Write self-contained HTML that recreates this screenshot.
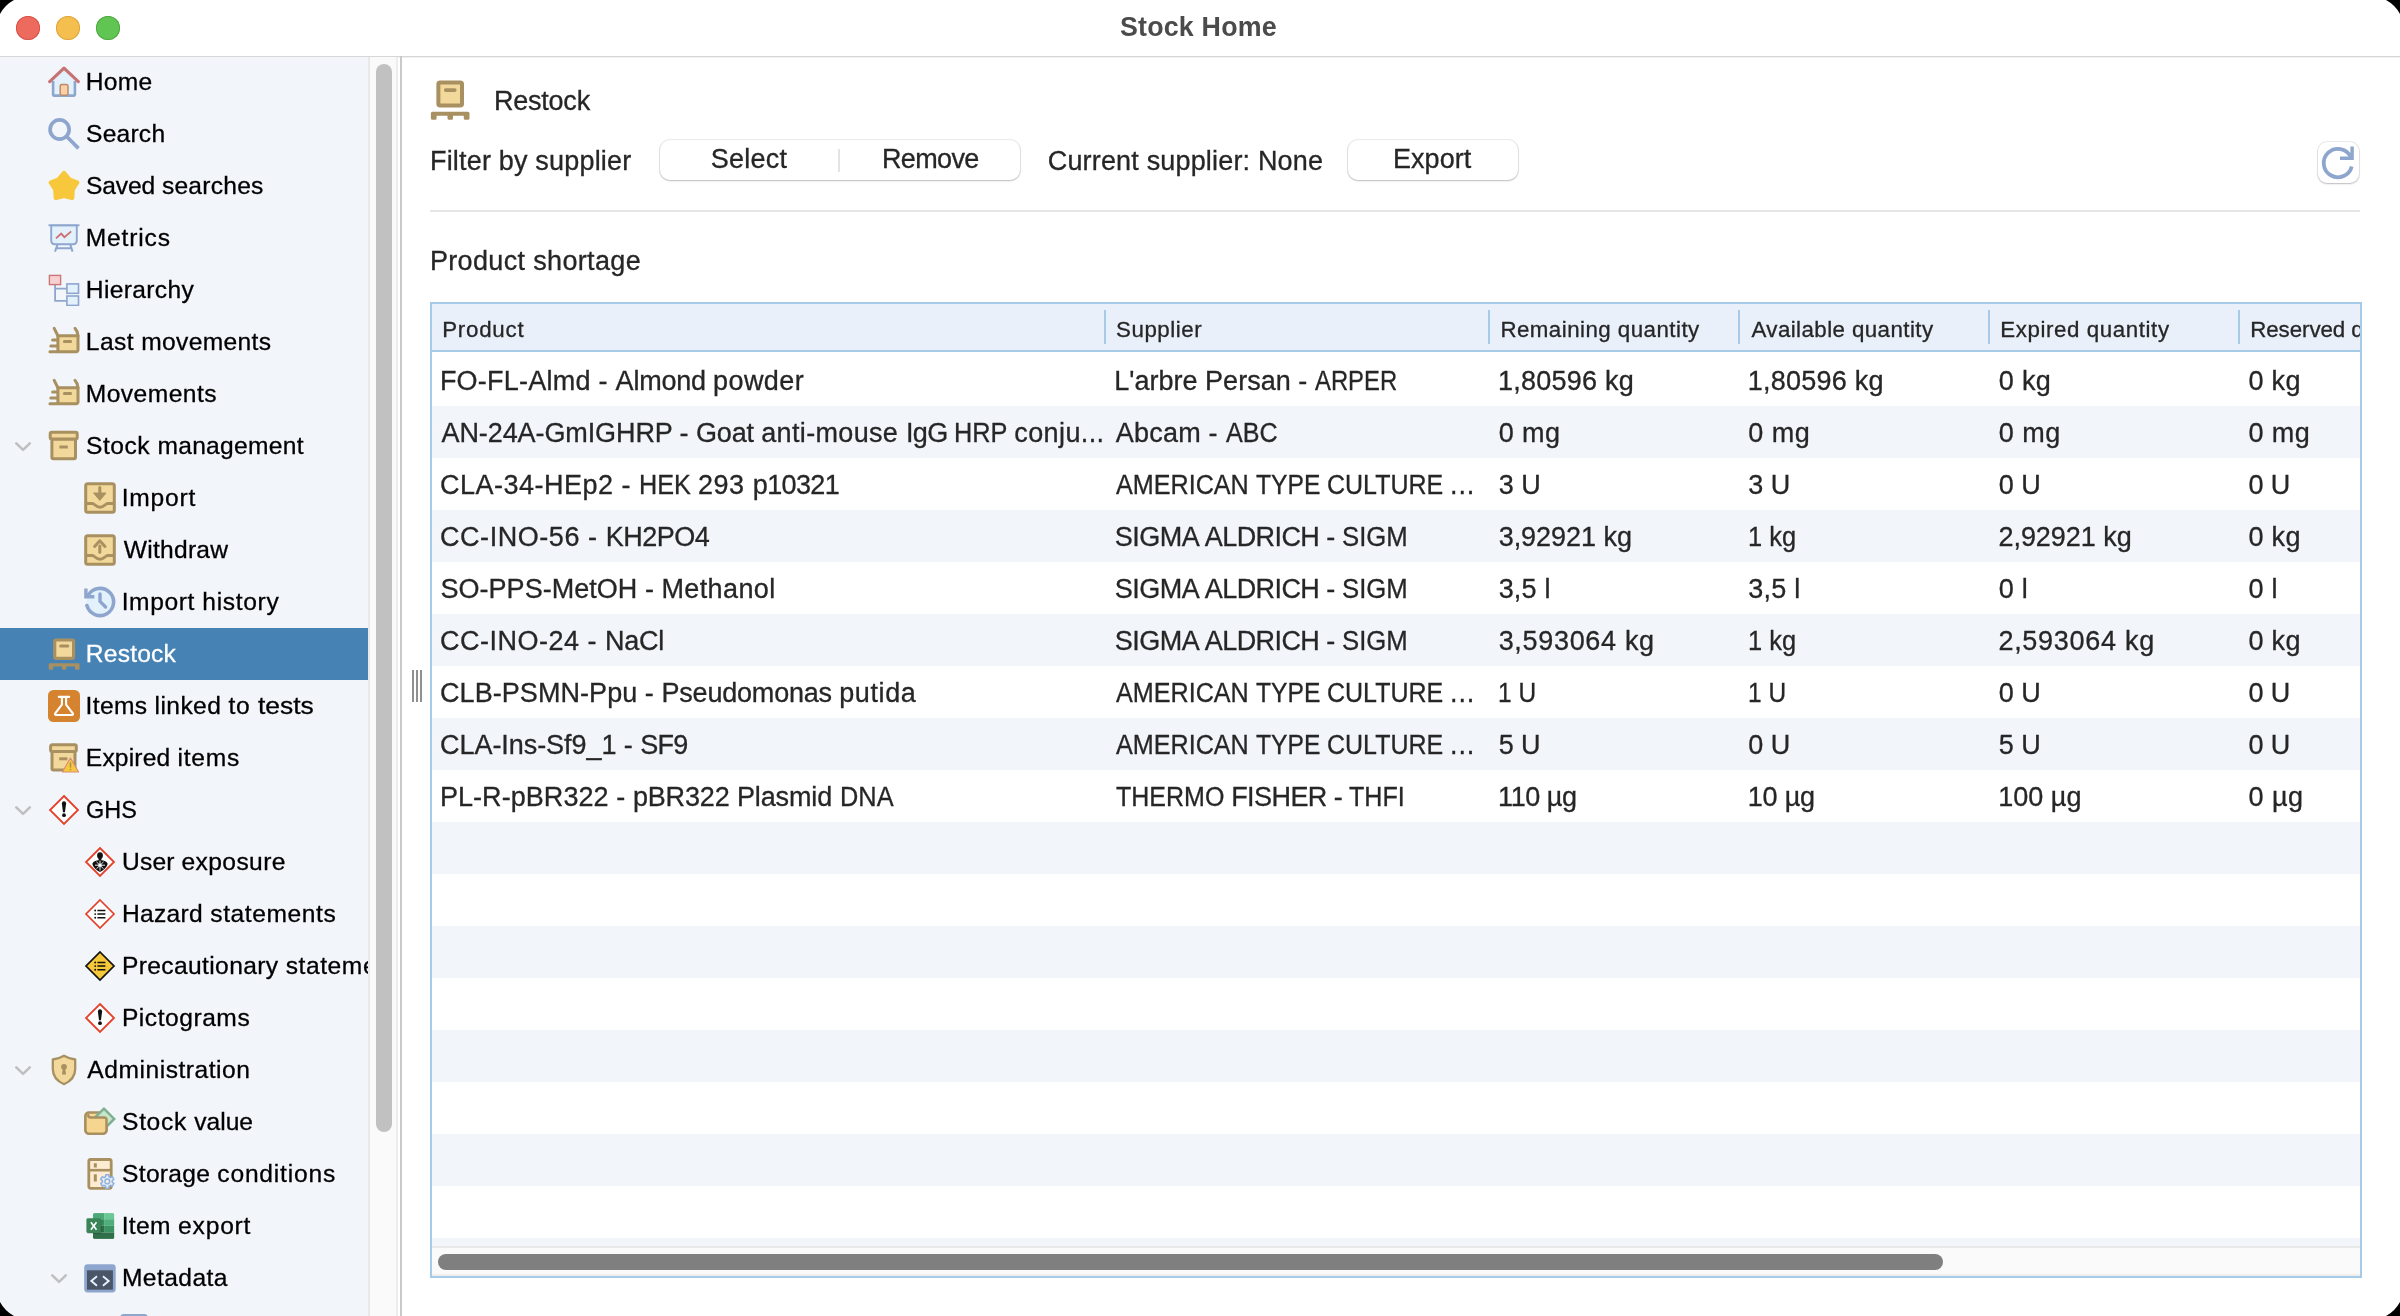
<!DOCTYPE html>
<html><head><meta charset="utf-8"><title>Stock Home</title>
<style>
*{box-sizing:border-box;margin:0;padding:0}
html,body{width:2400px;height:1316px;overflow:hidden;background:#fff}
body{font-family:"Liberation Sans",sans-serif;position:relative;color:#262626}
.abs,.ic{position:absolute}
.tx{position:absolute;line-height:1;white-space:pre;-webkit-text-stroke:0.3px currentColor}
.title{-webkit-text-stroke:0}
.sb{font-size:24.6px;font-weight:normal}
.cell{font-size:27px;font-weight:normal}
.hdr{font-size:22.3px;font-weight:normal}
.lbl{font-size:27px;font-weight:normal}
.title{font-size:26.8px;font-weight:bold}
#title{position:absolute;left:0;top:0;width:2400px;height:56px;background:#fff}
.dot{position:absolute;top:16px;width:24px;height:24px;border-radius:50%}
#tline{position:absolute;left:0;top:56px;width:2400px;height:1px;background:#d6d6d6}
#tline2{position:absolute;left:0;top:57px;width:2400px;height:1px;background:#f1f1f1}
#sidebar{position:absolute;left:0;top:57px;width:368px;height:1259px;background:#f2f6fb;overflow:hidden}
#sbin{position:absolute;left:0;top:-57px;width:368px;height:1400px}
#vtrack{position:absolute;left:368px;top:57px;width:30px;height:1259px;background:#fafafa;border-left:2px solid #e9e9e9;border-right:2px solid #ededed}
#vthumb{position:absolute;left:376px;top:64px;width:16px;height:1068px;border-radius:8px;background:#c1c1c1}
#split{position:absolute;left:400px;top:56px;width:2px;height:1260px;background:#c9c9c9}
.grip{position:absolute;top:670px;width:2px;height:32px;background:#909090}
.btn{position:absolute;top:140px;height:40px;background:#fff;border-radius:10px;box-shadow:0 0 0 1px rgba(0,0,0,0.075),0 1px 2px rgba(0,0,0,0.2)}
#hr{position:absolute;left:430px;top:210px;width:1930px;height:2px;background:#e6e6e6}
#table{position:absolute;left:430px;top:302px;width:1932px;height:976px;border:2px solid #a5cbe8;background:#fff;overflow:hidden}
#thead{position:absolute;left:0;top:0;width:1928px;height:48px;background:#e9f0fa;border-bottom:2px solid #a5cbe8}
#table .sep{position:absolute;top:6px;width:2px;height:34px;background:#a5cbe8}
.alt{position:absolute;left:0;width:1928px;height:52px;background:#f2f6fb}
#htrack{position:absolute;left:0;top:942px;width:1928px;height:30px;background:#fafafa;border-top:2px solid #e8e8e8;border-bottom:2px solid #efefef}
#hthumb{position:absolute;left:6px;top:950px;width:1505px;height:16px;border-radius:8px;background:#7f7f7f}
#win{position:absolute;left:0;top:0;width:2400px;height:1316px;overflow:hidden;transform:translateZ(0);will-change:transform;background:#fff}
</style></head><body><div id="win">
<div id="title"><span class="tx title" style="left:1119.98px;top:14px;letter-spacing:0.201px;color:#4b4b4b">Stock Home</span>
<div class="dot" style="left:16px;background:#ed6a5e;box-shadow:inset 0 0 0 1px #d9534a"></div>
<div class="dot" style="left:56px;background:#f5bf4f;box-shadow:inset 0 0 0 1px #dea73e"></div>
<div class="dot" style="left:96px;background:#61c554;box-shadow:inset 0 0 0 1px #52a843"></div>
</div>
<div id="tline"></div><div id="tline2"></div>
<div id="sidebar"><div id="sbin">
<svg class="ic" style="left:48px;top:66px" width="32" height="32" viewBox="0 0 32 32">
<path d="M5.1 14.6 L16 3.4 L26.9 14.6 V29.6 H5.1Z" fill="#e3f1fc"/>
<path d="M5.1 15 V28.4 a1.2 1.2 0 0 0 1.2 1.2 H25.7 a1.2 1.2 0 0 0 1.2-1.2 V15" stroke="#8ea6ce" stroke-width="2.6" fill="none"/>
<rect x="12.2" y="18.4" width="7.8" height="10.8" rx="1.6" fill="#fbd0a6" stroke="#b98c6a" stroke-width="1.5"/>
<path d="M1.7 15.6 L16 2.1 L30.3 15.6" stroke="#c87373" stroke-width="3.2" fill="none" stroke-linecap="round" stroke-linejoin="round"/>
</svg>
<span class="tx sb" style="left:85.80px;top:70px;letter-spacing:0.257px;color:#000">Home</span>
<svg class="ic" style="left:48px;top:118px" width="32" height="32" viewBox="0 0 32 32">
<circle cx="11.6" cy="11.5" r="9.55" stroke="#8ea6ce" stroke-width="3.7" fill="none"/>
<path d="M18.4 18.3 L30.5 30.4" stroke="#8ea6ce" stroke-width="3.7" fill="none"/>
</svg>
<span class="tx sb" style="left:86.00px;top:122px;letter-spacing:0.229px;color:#000">Search</span>
<svg class="ic" style="left:48px;top:170px" width="32" height="32" viewBox="0 0 32 32"><polygon points="16.00,3.10 21.29,9.52 29.03,12.57 24.56,19.58 24.05,27.88 16.00,25.80 7.95,27.88 7.44,19.58 2.97,12.57 10.71,9.52" fill="#f8c83c" stroke="#f8c83c" stroke-width="4.6" stroke-linejoin="round"/></svg>
<span class="tx sb" style="left:86.00px;top:174px;letter-spacing:-0.113px;color:#000">Saved </span><span class="tx sb" style="left:161.90px;top:174px;letter-spacing:0.243px;color:#000">searches</span>
<svg class="ic" style="left:48px;top:222px" width="32" height="32" viewBox="0 0 32 32">
<path d="M3.2 3.4 H28.8 V18.8 a3.4 3.4 0 0 1-3.4 3.4 H6.6 a3.4 3.4 0 0 1-3.4-3.4Z" fill="#e3f1fc" stroke="#8ea6ce" stroke-width="1.9"/>
<path d="M0.4 3.3 H31.6" stroke="#8ea6ce" stroke-width="1.8"/>
<path d="M9.6 22.4 L7 29.6 M22.2 22.4 L24.6 29.6 M8 26.2 H23.6" stroke="#8ea6ce" stroke-width="2" fill="none"/>
<path d="M8 16.4 L13.2 11.6 L16.4 15.2 L23.2 9.4" stroke="#cd6f6f" stroke-width="1.8" fill="none"/>
</svg>
<span class="tx sb" style="left:85.80px;top:226px;letter-spacing:0.825px;color:#000">Metrics</span>
<svg class="ic" style="left:48px;top:274px" width="32" height="32" viewBox="0 0 32 32">
<path d="M7.1 10.6 V26.8 H18.6 M7.1 14.7 H18.6" stroke="#8ea6ce" stroke-width="1.8" fill="none"/>
<rect x="1.4" y="1.4" width="11.2" height="9.2" fill="#f8d0d0" stroke="#cc7777" stroke-width="1.4"/>
<rect x="18.9" y="9.9" width="11.6" height="9.4" fill="#e3f1fc" stroke="#8ea6ce" stroke-width="1.6"/>
<rect x="18.9" y="22" width="11.6" height="9.4" fill="#e3f1fc" stroke="#8ea6ce" stroke-width="1.6"/>
</svg>
<span class="tx sb" style="left:85.80px;top:278px;letter-spacing:0.346px;color:#000">Hierarchy</span>
<svg class="ic" style="left:48px;top:326px" width="32" height="32" viewBox="0 0 32 32">
<path d="M9.9 9.7 H30 V24 a1.6 1.6 0 0 1-1.6 1.6 H9.9Z" fill="#f3d89c"/>
<path d="M1.9 25.7 H28.2 a1.8 1.8 0 0 0 1.8-1.8 V9.7 H9.9 V25.7" stroke="#a89060" stroke-width="3" fill="none" stroke-linecap="round" stroke-linejoin="round"/>
<path d="M9.9 9.7 L6.2 2.4 M30 9.7 C29.6 6 28.6 4 27 2.4" stroke="#a89060" stroke-width="3" fill="none" stroke-linecap="round"/>
<path d="M4.6 14 H9 M2.8 20 H9 M16.4 15.6 H22.6" stroke="#a89060" stroke-width="3" fill="none" stroke-linecap="round"/>
</svg>
<span class="tx sb" style="left:85.80px;top:330px;letter-spacing:0.414px;color:#000">Last </span><span class="tx sb" style="left:141.20px;top:330px;letter-spacing:0.334px;color:#000">movements</span>
<svg class="ic" style="left:48px;top:378px" width="32" height="32" viewBox="0 0 32 32">
<path d="M9.9 9.7 H30 V24 a1.6 1.6 0 0 1-1.6 1.6 H9.9Z" fill="#f3d89c"/>
<path d="M1.9 25.7 H28.2 a1.8 1.8 0 0 0 1.8-1.8 V9.7 H9.9 V25.7" stroke="#a89060" stroke-width="3" fill="none" stroke-linecap="round" stroke-linejoin="round"/>
<path d="M9.9 9.7 L6.2 2.4 M30 9.7 C29.6 6 28.6 4 27 2.4" stroke="#a89060" stroke-width="3" fill="none" stroke-linecap="round"/>
<path d="M4.6 14 H9 M2.8 20 H9 M16.4 15.6 H22.6" stroke="#a89060" stroke-width="3" fill="none" stroke-linecap="round"/>
</svg>
<span class="tx sb" style="left:85.80px;top:382px;letter-spacing:0.447px;color:#000">Movements</span>
<svg class="ic" style="left:13px;top:440px" width="20" height="14" viewBox="0 0 20 14"><path d="M3.3 3.4 L10.05 9.9 L16.8 3.4" stroke="#c0c0c0" stroke-width="2.7" fill="none" stroke-linecap="round" stroke-linejoin="round"/></svg>
<svg class="ic" style="left:48px;top:430px" width="32" height="32" viewBox="0 0 32 32">
<rect x="3.9" y="9" width="23.6" height="19.7" rx="1.5" fill="#f3d89c" stroke="#a89060" stroke-width="3"/>
<rect x="2.2" y="2.2" width="27" height="6.8" rx="1.5" fill="#f3d89c" stroke="#a89060" stroke-width="3"/>
<path d="M11.4 17 H19.8" stroke="#a89060" stroke-width="3" stroke-linecap="butt"/>
</svg>
<span class="tx sb" style="left:86.00px;top:434px;letter-spacing:0.509px;color:#000">Stock </span><span class="tx sb" style="left:157.40px;top:434px;letter-spacing:0.286px;color:#000">management</span>
<svg class="ic" style="left:84px;top:482px" width="32" height="32" viewBox="0 0 32 32">
<rect x="1.7" y="1.7" width="28.6" height="28.6" rx="2" fill="#f3d89c" stroke="#a89060" stroke-width="3"/>
<path d="M2 21.4 H8.4 C10.4 21.4 11.6 25.2 16 25.2 C20.4 25.2 21.6 21.4 23.6 21.4 H30" stroke="#a89060" stroke-width="3" fill="none"/>
<path d="M15.8 5.6 V13" stroke="#a89060" stroke-width="3" stroke-linecap="round"/><path d="M9.6 11 H22 L15.8 18.4Z" fill="#a89060" stroke="#a89060" stroke-width="1" stroke-linejoin="round"/></svg>
<span class="tx sb" style="left:121.70px;top:486px;letter-spacing:0.806px;color:#000">Import</span>
<svg class="ic" style="left:84px;top:534px" width="32" height="32" viewBox="0 0 32 32">
<rect x="1.7" y="1.7" width="28.6" height="28.6" rx="2" fill="#f3d89c" stroke="#a89060" stroke-width="3"/>
<path d="M2 21.4 H8.4 C10.4 21.4 11.6 25.2 16 25.2 C20.4 25.2 21.6 21.4 23.6 21.4 H30" stroke="#a89060" stroke-width="3" fill="none"/>
<path d="M15.8 12 V18.2" stroke="#a89060" stroke-width="3" stroke-linecap="round"/><path d="M10.6 12.4 L15.8 6.8 L21 12.4" fill="none" stroke="#a89060" stroke-width="3" stroke-linecap="round" stroke-linejoin="round"/></svg>
<span class="tx sb" style="left:123.80px;top:538px;letter-spacing:0.252px;color:#000">Withdraw</span>
<svg class="ic" style="left:84px;top:586px" width="32" height="32" viewBox="0 0 32 32">
<circle cx="16" cy="16" r="13.6" fill="#e3f1fc"/>
<path d="M2.9 19.6 A13.6 13.6 0 1 0 4.2 9.2" stroke="#8ea6ce" stroke-width="3.6" fill="none" stroke-linecap="round"/>
<path d="M1.9 2.4 V10.8 H10.4" stroke="#8ea6ce" stroke-width="3.4" fill="none"/>
<path d="M16 8 V15.4 L21.6 21" stroke="#8ea6ce" stroke-width="3.4" fill="none" stroke-linecap="round" stroke-linejoin="round"/>
</svg>
<span class="tx sb" style="left:121.70px;top:590px;letter-spacing:0.581px;color:#000">Import </span><span class="tx sb" style="left:202.30px;top:590px;letter-spacing:0.660px;color:#000">history</span>
<div class="abs" style="left:0;top:628px;width:368px;height:52px;background:#4682b4"></div>
<svg class="ic" style="left:48px;top:638px" width="32" height="32" viewBox="0 0 32 32">
<rect x="6.7" y="2" width="18.9" height="18.4" rx="1.4" fill="#f3d89c" stroke="#a89060" stroke-width="3.2"/>
<path d="M12.6 8 H19.8" stroke="#a89060" stroke-width="3" stroke-linecap="round"/>
<path d="M0.7 26.5 a1.2 1.2 0 0 1 1.2-1.2 H30.4 a1.2 1.2 0 0 1 1.2 1.2 V30.6 a1.2 1.2 0 0 1-1.2 1.2 H28.2 a1.2 1.2 0 0 1-1.2-1.2 V28.6 H18.4 V30.6 a1.2 1.2 0 0 1-1.2 1.2 H15.2 a1.2 1.2 0 0 1-1.2-1.2 V28.6 H5.3 V30.6 a1.2 1.2 0 0 1-1.2 1.2 H1.9 a1.2 1.2 0 0 1-1.2-1.2Z" fill="#a89060"/>
</svg>
<span class="tx sb" style="left:85.80px;top:642px;letter-spacing:0.209px;color:#fff">Restock</span>
<svg class="ic" style="left:48px;top:690px" width="32" height="32" viewBox="0 0 32 32">
<rect x="0" y="0" width="32" height="32" rx="5.5" fill="#d5832f"/>
<path d="M10.8 6.9 H21.2 M13.9 7 V14.6 L7.2 23.4 a1 1 0 0 0 0.8 1.6 H24 a1 1 0 0 0 0.8-1.6 L18.1 14.6 V7" stroke="#fff" stroke-width="2.1" fill="none" stroke-linecap="round" stroke-linejoin="round"/>
</svg>
<span class="tx sb" style="left:85.60px;top:694px;letter-spacing:0.322px;color:#000">Items </span><span class="tx sb" style="left:154.50px;top:694px;letter-spacing:0.429px;color:#000">linked </span><span class="tx sb" style="left:228.60px;top:694px;letter-spacing:0.685px;color:#000">to </span><span class="tx sb" style="left:257.98px;top:694px;transform-origin:0 0;transform:scaleX(1.0740);color:#000">tests</span>
<svg class="ic" style="left:48px;top:742px" width="32" height="32" viewBox="0 0 32 32">
<rect x="4" y="9.5" width="23" height="18.6" rx="1.5" fill="#f3d89c" stroke="#a89060" stroke-width="3"/>
<rect x="2.6" y="2.8" width="25.7" height="6.7" rx="1.5" fill="#f3d89c" stroke="#a89060" stroke-width="3"/>
<path d="M11.2 16.8 H19.4" stroke="#a89060" stroke-width="3"/>
<path d="M22.4 16 L30.6 30 H14.4Z" fill="#f8c83c" stroke="#d98b7a" stroke-width="1.1" stroke-linejoin="round"/>
<path d="M22.5 20.4 V25.6" stroke="#a08a5a" stroke-width="1.4"/><circle cx="22.5" cy="27.6" r="0.8" fill="#a08a5a"/>
</svg>
<span class="tx sb" style="left:85.80px;top:746px;letter-spacing:0.183px;color:#000">Expired </span><span class="tx sb" style="left:177.50px;top:746px;letter-spacing:0.734px;color:#000">items</span>
<svg class="ic" style="left:13px;top:804px" width="20" height="14" viewBox="0 0 20 14"><path d="M3.3 3.4 L10.05 9.9 L16.8 3.4" stroke="#c0c0c0" stroke-width="2.7" fill="none" stroke-linecap="round" stroke-linejoin="round"/></svg>
<svg class="ic" style="left:48px;top:794px" width="32" height="32" viewBox="0 0 32 32"><path d="M16 2 L30 16 L16 30 L2 16Z" fill="#fff" stroke="#e5402a" stroke-width="1.8" stroke-linejoin="miter"/><path d="M13.9 9.4 a2.1 2.1 0 0 1 4.2 0 L17 18.2 H15Z" fill="#111"/><circle cx="16" cy="21.2" r="1.9" fill="#111"/></svg>
<span class="tx sb" style="left:85.96px;top:798px;transform-origin:0 0;transform:scaleX(0.9531);color:#000">GHS</span>
<svg class="ic" style="left:84px;top:846px" width="32" height="32" viewBox="0 0 32 32"><path d="M16 2 L30 16 L16 30 L2 16Z" fill="#fff" stroke="#e5402a" stroke-width="1.8" stroke-linejoin="miter"/>
<ellipse cx="16" cy="9.6" rx="2.9" ry="3.4" fill="#111"/>
<path d="M14.6 12 H17.4 V14.2 C20 14.4 23 15.6 23.6 17.6 C23.6 20.6 19.6 24.6 16 26 C12.4 24.6 8.4 20.6 8.4 17.6 C9 15.6 12 14.4 14.6 14.2Z" fill="#111"/>
<path d="M16 14.6 V24.6 M11 19.2 H21 M12.4 15.8 L19.6 22.8 M19.6 15.8 L12.4 22.8" stroke="#fff" stroke-width="0.9"/>
<circle cx="16" cy="19.2" r="1.6" fill="#fff"/>
</svg>
<span class="tx sb" style="left:122.10px;top:850px;letter-spacing:0.127px;color:#000">User </span><span class="tx sb" style="left:181.50px;top:850px;letter-spacing:0.399px;color:#000">exposure</span>
<svg class="ic" style="left:84px;top:898px" width="32" height="32" viewBox="0 0 32 32"><path d="M16 2 L30 16 L16 30 L2 16Z" fill="#fff" stroke="#e5402a" stroke-width="1.7" stroke-linejoin="miter"/><path d="M13.4 12.5 H21.4 M13.4 16.1 H21.4 M13.4 19.7 H21.4" stroke="#111" stroke-width="1.5"/><circle cx="11.2" cy="12.5" r="0.95" fill="#111"/><circle cx="11.2" cy="16.1" r="0.95" fill="#111"/><circle cx="11.2" cy="19.7" r="0.95" fill="#111"/></svg>
<span class="tx sb" style="left:121.90px;top:902px;letter-spacing:0.325px;color:#000">Hazard </span><span class="tx sb" style="left:210.30px;top:902px;letter-spacing:0.567px;color:#000">statements</span>
<svg class="ic" style="left:84px;top:950px" width="32" height="32" viewBox="0 0 32 32"><path d="M16 2 L30 16 L16 30 L2 16Z" fill="#f5c83a" stroke="#111" stroke-width="1.7" stroke-linejoin="miter"/><path d="M13.4 12.5 H21.4 M13.4 16.1 H21.4 M13.4 19.7 H21.4" stroke="#111" stroke-width="1.5"/><circle cx="11.2" cy="12.5" r="0.95" fill="#111"/><circle cx="11.2" cy="16.1" r="0.95" fill="#111"/><circle cx="11.2" cy="19.7" r="0.95" fill="#111"/></svg>
<span class="tx sb" style="left:121.90px;top:954px;letter-spacing:0.373px;color:#000">Precautionary </span><span class="tx sb" style="left:285.70px;top:954px;letter-spacing:0.567px;color:#000">statements</span>
<svg class="ic" style="left:84px;top:1002px" width="32" height="32" viewBox="0 0 32 32"><path d="M16 2 L30 16 L16 30 L2 16Z" fill="#fff" stroke="#e5402a" stroke-width="1.8" stroke-linejoin="miter"/><path d="M13.9 9.4 a2.1 2.1 0 0 1 4.2 0 L17 18.2 H15Z" fill="#111"/><circle cx="16" cy="21.2" r="1.9" fill="#111"/></svg>
<span class="tx sb" style="left:121.90px;top:1006px;letter-spacing:0.532px;color:#000">Pictograms</span>
<svg class="ic" style="left:13px;top:1064px" width="20" height="14" viewBox="0 0 20 14"><path d="M3.3 3.4 L10.05 9.9 L16.8 3.4" stroke="#c0c0c0" stroke-width="2.7" fill="none" stroke-linecap="round" stroke-linejoin="round"/></svg>
<svg class="ic" style="left:48px;top:1054px" width="32" height="32" viewBox="0 0 32 32">
<path d="M16 1.7 C12.6 3.7 8.6 5.1 4.8 5.5 V15 C4.8 22.4 9.6 27.4 16 30.2 C22.4 27.4 27.2 22.4 27.2 15 V5.5 C23.4 5.1 19.4 3.7 16 1.7Z" fill="#f3d89c" stroke="#a89060" stroke-width="2.3" stroke-linejoin="round"/>
<circle cx="16" cy="12.8" r="2.9" fill="#a89060"/>
<path d="M15 13.6 H17 L18.1 20.5 H13.9Z" fill="#a89060"/>
</svg>
<span class="tx sb" style="left:87.35px;top:1058px;letter-spacing:0.523px;color:#000">Administration</span>
<svg class="ic" style="left:84px;top:1106px" width="32" height="32" viewBox="0 0 32 32">
<rect x="1.45" y="6.45" width="21.05" height="21.25" rx="3.4" fill="#f8d894" stroke="#a89060" stroke-width="2.5"/>
<path d="M19.9 2.65 L30.2 12.95 L21.5 21.65 L11.2 11.35Z" fill="#c8e6c9" stroke="#80b092" stroke-width="2.5" stroke-linejoin="miter"/>
<path d="M1.45 10 V24.3 a3.4 3.4 0 0 0 3.4 3.4 H19.1 a3.4 3.4 0 0 0 3.4-3.4 V13.8 a2.4 2.4 0 0 0-2.4-2.4 H6.6 C5.2 11.4 4.3 10.8 4.3 9.2" fill="#f6d591" stroke="#a89060" stroke-width="2.5" stroke-linecap="round"/>
</svg>
<span class="tx sb" style="left:122.10px;top:1110px;letter-spacing:0.643px;color:#000">Stock </span><span class="tx sb" style="left:194.30px;top:1110px;letter-spacing:-0.029px;color:#000">value</span>
<svg class="ic" style="left:84px;top:1158px" width="32" height="32" viewBox="0 0 32 32">
<rect x="4.8" y="1.5" width="22.4" height="28.8" rx="1.8" fill="#fdecd2" stroke="#a89060" stroke-width="2.8"/>
<path d="M4.8 12.2 H27.2" stroke="#a89060" stroke-width="2.6"/>
<path d="M11.3 5.2 V9.5 M11.3 16.2 V23.6" stroke="#a89060" stroke-width="3"/>
<polygon points="25.01,18.75 24.85,16.73 21.75,16.73 21.59,18.75 20.09,19.62 18.25,18.74 16.70,21.43 18.38,22.58 18.38,24.32 16.70,25.47 18.25,28.16 20.09,27.28 21.59,28.15 21.75,30.17 24.85,30.17 25.01,28.15 26.51,27.28 28.35,28.16 29.90,25.47 28.22,24.32 28.22,22.58 29.90,21.43 28.35,18.74 26.51,19.62" fill="#e6f0fb" stroke="#8fb0e0" stroke-width="1.5" stroke-linejoin="round"/>
<circle cx="23.3" cy="23.45" r="2.4" fill="#fdeccd" stroke="#8fb0e0" stroke-width="1.4"/>
</svg>
<span class="tx sb" style="left:122.10px;top:1162px;letter-spacing:0.277px;color:#000">Storage </span><span class="tx sb" style="left:217.30px;top:1162px;letter-spacing:0.806px;color:#000">conditions</span>
<svg class="ic" style="left:84px;top:1210px" width="32" height="32" viewBox="0 0 32 32">
<defs><clipPath id="xc"><rect x="8.9" y="3.1" width="21.5" height="25.8" rx="1.6"/></clipPath></defs>
<g clip-path="url(#xc)">
<rect x="8.9" y="3.1" width="11.2" height="6.1" fill="#4da878"/><rect x="20.1" y="3.1" width="10.3" height="6.1" fill="#6ac894"/>
<rect x="8.9" y="9.2" width="11.2" height="6.6" fill="#3a8a5a"/><rect x="20.1" y="9.2" width="10.3" height="6.6" fill="#4fae7c"/>
<rect x="8.9" y="15.8" width="11.2" height="6.6" fill="#2f6d49"/><rect x="20.1" y="15.8" width="10.3" height="6.6" fill="#3a9360"/>
<rect x="8.9" y="22.4" width="21.5" height="6.5" fill="#2f7049"/>
</g>
<rect x="3.1" y="9" width="14.4" height="14.8" rx="1.4" fill="#000" opacity="0.2"/>
<rect x="2.4" y="8.3" width="14.4" height="14.6" rx="1.4" fill="#3a8558"/>
<path d="M6.9 12.3 L12.5 19.7 M12.5 12.3 L6.9 19.7" stroke="#fff" stroke-width="1.6"/>
</svg>
<span class="tx sb" style="left:121.70px;top:1214px;letter-spacing:0.346px;color:#000">Item </span><span class="tx sb" style="left:178.10px;top:1214px;letter-spacing:0.795px;color:#000">export</span>
<svg class="ic" style="left:49px;top:1272px" width="20" height="14" viewBox="0 0 20 14"><path d="M3.3 3.4 L10.05 9.9 L16.8 3.4" stroke="#c0c0c0" stroke-width="2.7" fill="none" stroke-linecap="round" stroke-linejoin="round"/></svg>
<svg class="ic" style="left:84px;top:1262px" width="32" height="32" viewBox="0 0 32 32">
<rect x="0.2" y="2.2" width="31.5" height="28.3" rx="3.4" fill="#8ea6ce"/>
<rect x="3" y="8.3" width="25.9" height="19.4" fill="#4a5568"/>
<path d="M13 14.2 L7.3 18.9 L13 23.7 M18.9 14.2 L24.7 18.9 L18.9 23.7" stroke="#e6f2ff" stroke-width="1.9" fill="none"/>
</svg>
<span class="tx sb" style="left:121.90px;top:1266px;letter-spacing:0.433px;color:#000">Metadata</span>
<svg class="ic" style="left:120px;top:1314px" width="28" height="28" viewBox="0 0 28 28"><rect x="0.2" y="0" width="27.6" height="28" rx="3.4" fill="#8ea6ce"/></svg>
</div></div>
<div id="vtrack"></div><div id="vthumb"></div>
<div id="split"></div>
<i class="grip" style="left:412px"></i><i class="grip" style="left:416px"></i><i class="grip" style="left:420px"></i>
<svg class="ic" style="left:430px;top:80px" width="40" height="40" viewBox="0 0 32 32">
<rect x="6.7" y="2" width="18.9" height="18.4" rx="1.4" fill="#f3d89c" stroke="#a89060" stroke-width="3.2"/>
<path d="M12.6 8 H19.8" stroke="#a89060" stroke-width="3" stroke-linecap="round"/>
<path d="M0.7 26.5 a1.2 1.2 0 0 1 1.2-1.2 H30.4 a1.2 1.2 0 0 1 1.2 1.2 V30.6 a1.2 1.2 0 0 1-1.2 1.2 H28.2 a1.2 1.2 0 0 1-1.2-1.2 V28.6 H18.4 V30.6 a1.2 1.2 0 0 1-1.2 1.2 H15.2 a1.2 1.2 0 0 1-1.2-1.2 V28.6 H5.3 V30.6 a1.2 1.2 0 0 1-1.2 1.2 H1.9 a1.2 1.2 0 0 1-1.2-1.2Z" fill="#a89060"/>
</svg>
<span class="tx lbl" style="left:493.89px;top:88px;letter-spacing:-0.210px">Restock</span>
<span class="tx lbl" style="left:429.99px;top:148px;letter-spacing:0.186px">Filter by supplier</span>
<span class="tx lbl" style="left:1047.73px;top:148px;letter-spacing:0.172px">Current supplier: None</span>
<span class="tx lbl" style="left:429.89px;top:248px;letter-spacing:0.345px">Product shortage</span>
<div class="btn" style="left:660px;width:360px"><i class="abs" style="left:178px;top:9px;width:2px;height:23px;background:#e4e4e4"></i></div>
<span class="tx lbl" style="left:710.76px;top:146px;letter-spacing:0.221px">Select</span>
<span class="tx lbl" style="left:881.89px;top:146px;letter-spacing:-0.629px">Remove</span>
<div class="btn" style="left:1348px;width:170px"></div>
<span class="tx lbl" style="left:1393.09px;top:146px;letter-spacing:0.014px">Export</span>
<div class="btn" style="left:2318px;top:142px;width:41px;height:41px;border-radius:9px">
<svg class="ic" style="left:0;top:0" width="41" height="41" viewBox="0 0 41 41"><path d="M33.7 24.5 A14.2 14.2 0 1 1 32.6 14.6" stroke="#8ea6ce" stroke-width="3.8" fill="none"/><path d="M32.4 4.4 H35.8 V18 H22 V14.4 H32.4Z" fill="#8ea6ce"/></svg></div>
<div id="hr"></div>
<div id="table">
<div id="thead"></div>
<span class="tx hdr" style="left:10.20px;top:15px;letter-spacing:0.759px">Product</span>
<span class="tx hdr" style="left:684.00px;top:15px;letter-spacing:0.559px">Supplier</span>
<i class="sep" style="left:672px"></i>
<span class="tx hdr" style="left:1068.40px;top:15px;letter-spacing:0.469px">Remaining quantity</span>
<i class="sep" style="left:1056px"></i>
<span class="tx hdr" style="left:1319.45px;top:15px;letter-spacing:0.425px">Available quantity</span>
<i class="sep" style="left:1306px"></i>
<span class="tx hdr" style="left:1568.30px;top:15px;letter-spacing:0.591px">Expired quantity</span>
<i class="sep" style="left:1556px"></i>
<span class="tx hdr" style="left:1818.20px;top:15px;letter-spacing:-0.057px">Reserved quantity</span>
<i class="sep" style="left:1806px"></i>
<span class="tx cell" style="left:7.89px;top:64px;letter-spacing:0.247px">FO-FL-Almd - </span><span class="tx cell" style="left:183.60px;top:64px;letter-spacing:-0.221px">Almond </span><span class="tx cell" style="left:281.11px;top:64px;letter-spacing:0.391px">powder</span>
<span class="tx cell" style="left:682.19px;top:64px;letter-spacing:0.021px">L'arbre Persan - </span><span class="tx cell" style="left:882.80px;top:64px;transform-origin:0 0;transform:scaleX(0.8828)">ARPER</span>
<span class="tx cell" style="left:1066.06px;top:64px;letter-spacing:0.237px">1,80596 kg</span>
<span class="tx cell" style="left:1315.76px;top:64px;letter-spacing:0.237px">1,80596 kg</span>
<span class="tx cell" style="left:1566.86px;top:64px;letter-spacing:0.304px">0 kg</span>
<span class="tx cell" style="left:1816.46px;top:64px;letter-spacing:0.304px">0 kg</span>
<div class="alt" style="top:102px"></div>
<span class="tx cell" style="left:9.55px;top:116px;letter-spacing:-0.098px">AN-24A-GmIGHRP - </span><span class="tx cell" style="left:263.93px;top:116px;letter-spacing:-0.145px">Goat </span><span class="tx cell" style="left:329.26px;top:116px;letter-spacing:0.341px">anti-mouse </span><span class="tx cell" style="left:474.09px;top:116px;letter-spacing:-0.733px">IgG </span><span class="tx cell" style="left:522.32px;top:116px;transform-origin:0 0;transform:scaleX(0.9376)">HRP </span><span class="tx cell" style="left:582.36px;top:116px;letter-spacing:0.374px">conju...</span>
<span class="tx cell" style="left:683.85px;top:116px;letter-spacing:0.202px">Abcam - </span><span class="tx cell" style="left:793.50px;top:116px;transform-origin:0 0;transform:scaleX(0.9305)">ABC</span>
<span class="tx cell" style="left:1066.66px;top:116px;letter-spacing:0.443px">0 mg</span>
<span class="tx cell" style="left:1316.36px;top:116px;letter-spacing:0.443px">0 mg</span>
<span class="tx cell" style="left:1566.86px;top:116px;letter-spacing:0.443px">0 mg</span>
<span class="tx cell" style="left:1816.46px;top:116px;letter-spacing:0.443px">0 mg</span>
<span class="tx cell" style="left:8.03px;top:168px;letter-spacing:0.484px">CLA-34-HEp2 - </span><span class="tx cell" style="left:207.03px;top:168px;transform-origin:0 0;transform:scaleX(0.9345)">HEK </span><span class="tx cell" style="left:265.93px;top:168px;letter-spacing:0.579px">293 </span><span class="tx cell" style="left:320.81px;top:168px;letter-spacing:-0.646px">p10321</span>
<span class="tx cell" style="left:683.85px;top:168px;transform-origin:0 0;transform:scaleX(0.9313)">AMERICAN </span><span class="tx cell" style="left:823.61px;top:168px;transform-origin:0 0;transform:scaleX(0.9127)">TYPE </span><span class="tx cell" style="left:894.93px;top:168px;transform-origin:0 0;transform:scaleX(0.9259)">CULTURE </span><span class="tx cell" style="left:1018.09px;top:168px;letter-spacing:0.816px">...</span>
<span class="tx cell" style="left:1066.66px;top:168px;letter-spacing:-0.004px">3 U</span>
<span class="tx cell" style="left:1316.36px;top:168px;letter-spacing:-0.004px">3 U</span>
<span class="tx cell" style="left:1566.86px;top:168px;letter-spacing:-0.104px">0 U</span>
<span class="tx cell" style="left:1816.46px;top:168px;letter-spacing:-0.104px">0 U</span>
<div class="alt" style="top:206px"></div>
<span class="tx cell" style="left:8.03px;top:220px;letter-spacing:0.553px">CC-INO-56 - </span><span class="tx cell" style="left:173.69px;top:220px;letter-spacing:-0.496px">KH2PO4</span>
<span class="tx cell" style="left:682.76px;top:220px;letter-spacing:-0.498px">SIGMA </span><span class="tx cell" style="left:772.80px;top:220px;letter-spacing:-0.586px">ALDRICH - </span><span class="tx cell" style="left:909.50px;top:220px;transform-origin:0 0;transform:scaleX(0.9525)">SIGM</span>
<span class="tx cell" style="left:1066.66px;top:220px;letter-spacing:-0.029px">3,92921 kg</span>
<span class="tx cell" style="left:1315.86px;top:220px;transform-origin:0 0;transform:scaleX(0.9416)">1 kg</span>
<span class="tx cell" style="left:1566.43px;top:220px;letter-spacing:-0.027px">2,92921 kg</span>
<span class="tx cell" style="left:1816.46px;top:220px;letter-spacing:0.304px">0 kg</span>
<span class="tx cell" style="left:8.46px;top:272px;letter-spacing:0.034px">SO-PPS-MetOH - </span><span class="tx cell" style="left:229.49px;top:272px;letter-spacing:0.373px">Methanol</span>
<span class="tx cell" style="left:682.76px;top:272px;letter-spacing:-0.498px">SIGMA </span><span class="tx cell" style="left:772.80px;top:272px;letter-spacing:-0.586px">ALDRICH - </span><span class="tx cell" style="left:909.50px;top:272px;transform-origin:0 0;transform:scaleX(0.9525)">SIGM</span>
<span class="tx cell" style="left:1066.66px;top:272px;letter-spacing:0.194px">3,5 l</span>
<span class="tx cell" style="left:1316.36px;top:272px;letter-spacing:0.194px">3,5 l</span>
<span class="tx cell" style="left:1566.86px;top:272px;letter-spacing:0.246px">0 l</span>
<span class="tx cell" style="left:1816.46px;top:272px;letter-spacing:0.246px">0 l</span>
<div class="alt" style="top:310px"></div>
<span class="tx cell" style="left:8.03px;top:324px;letter-spacing:0.487px">CC-INO-24 - </span><span class="tx cell" style="left:172.89px;top:324px;letter-spacing:-0.242px">NaCl</span>
<span class="tx cell" style="left:682.76px;top:324px;letter-spacing:-0.498px">SIGMA </span><span class="tx cell" style="left:772.80px;top:324px;letter-spacing:-0.586px">ALDRICH - </span><span class="tx cell" style="left:909.50px;top:324px;transform-origin:0 0;transform:scaleX(0.9525)">SIGM</span>
<span class="tx cell" style="left:1066.66px;top:324px;letter-spacing:0.682px">3,593064 kg</span>
<span class="tx cell" style="left:1315.86px;top:324px;transform-origin:0 0;transform:scaleX(0.9416)">1 kg</span>
<span class="tx cell" style="left:1566.43px;top:324px;letter-spacing:0.714px">2,593064 kg</span>
<span class="tx cell" style="left:1816.46px;top:324px;letter-spacing:0.304px">0 kg</span>
<span class="tx cell" style="left:8.03px;top:376px;letter-spacing:0.060px">CLB-PSMN-Ppu - </span><span class="tx cell" style="left:229.49px;top:376px;letter-spacing:-0.200px">Pseudomonas </span><span class="tx cell" style="left:407.21px;top:376px;letter-spacing:0.608px">putida</span>
<span class="tx cell" style="left:683.85px;top:376px;transform-origin:0 0;transform:scaleX(0.9313)">AMERICAN </span><span class="tx cell" style="left:823.61px;top:376px;transform-origin:0 0;transform:scaleX(0.9127)">TYPE </span><span class="tx cell" style="left:894.93px;top:376px;transform-origin:0 0;transform:scaleX(0.9259)">CULTURE </span><span class="tx cell" style="left:1018.09px;top:376px;letter-spacing:0.816px">...</span>
<span class="tx cell" style="left:1066.22px;top:376px;transform-origin:0 0;transform:scaleX(0.9063)">1 U</span>
<span class="tx cell" style="left:1315.92px;top:376px;transform-origin:0 0;transform:scaleX(0.9063)">1 U</span>
<span class="tx cell" style="left:1566.86px;top:376px;letter-spacing:-0.104px">0 U</span>
<span class="tx cell" style="left:1816.46px;top:376px;letter-spacing:-0.104px">0 U</span>
<div class="alt" style="top:414px"></div>
<span class="tx cell" style="left:8.03px;top:428px;letter-spacing:-0.054px">CLA-Ins-Sf9_1 - </span><span class="tx cell" style="left:208.26px;top:428px;letter-spacing:-0.697px">SF9</span>
<span class="tx cell" style="left:683.85px;top:428px;transform-origin:0 0;transform:scaleX(0.9313)">AMERICAN </span><span class="tx cell" style="left:823.61px;top:428px;transform-origin:0 0;transform:scaleX(0.9127)">TYPE </span><span class="tx cell" style="left:894.93px;top:428px;transform-origin:0 0;transform:scaleX(0.9259)">CULTURE </span><span class="tx cell" style="left:1018.09px;top:428px;letter-spacing:0.816px">...</span>
<span class="tx cell" style="left:1066.66px;top:428px;letter-spacing:-0.104px">5 U</span>
<span class="tx cell" style="left:1316.36px;top:428px;letter-spacing:-0.104px">0 U</span>
<span class="tx cell" style="left:1566.86px;top:428px;letter-spacing:-0.104px">5 U</span>
<span class="tx cell" style="left:1816.46px;top:428px;letter-spacing:-0.104px">0 U</span>
<span class="tx cell" style="left:7.89px;top:480px;letter-spacing:0.067px">PL-R-pBR322 - </span><span class="tx cell" style="left:200.91px;top:480px;letter-spacing:-0.157px">pBR322 </span><span class="tx cell" style="left:304.89px;top:480px;letter-spacing:-0.116px">Plasmid </span><span class="tx cell" style="left:407.62px;top:480px;transform-origin:0 0;transform:scaleX(0.9393)">DNA</span>
<span class="tx cell" style="left:683.91px;top:480px;transform-origin:0 0;transform:scaleX(0.9260)">THERMO </span><span class="tx cell" style="left:799.19px;top:480px;letter-spacing:-0.570px">FISHER - </span><span class="tx cell" style="left:917.11px;top:480px;transform-origin:0 0;transform:scaleX(0.9293)">THFI</span>
<span class="tx cell" style="left:1066.06px;top:480px;letter-spacing:-0.434px">110 µg</span>
<span class="tx cell" style="left:1315.76px;top:480px;letter-spacing:-0.214px">10 µg</span>
<span class="tx cell" style="left:1566.26px;top:480px;letter-spacing:0.006px">100 µg</span>
<span class="tx cell" style="left:1816.46px;top:480px;letter-spacing:0.455px">0 µg</span>
<div class="alt" style="top:518px"></div>
<div class="alt" style="top:622px"></div>
<div class="alt" style="top:726px"></div>
<div class="alt" style="top:830px"></div>
<div class="alt" style="top:934px"></div>
<div id="htrack"></div><div id="hthumb"></div>
</div>
<svg class="ic" style="left:0;top:0" width="16" height="16"><path d="M0 0H14A34.2 34.2 0 0 0 0 14Z" fill="#000"/></svg>
<svg class="ic" style="left:2384px;top:0" width="16" height="16"><path d="M16 0H2A34.2 34.2 0 0 1 16 14Z" fill="#000"/></svg>
<svg class="ic" style="left:0;top:1300px" width="16" height="16"><path d="M0 16H14A34.2 34.2 0 0 1 0 2Z" fill="#000"/></svg>
<svg class="ic" style="left:2384px;top:1300px" width="16" height="16"><path d="M16 16H2A34.2 34.2 0 0 0 16 2Z" fill="#000"/></svg>
</div></body></html>
